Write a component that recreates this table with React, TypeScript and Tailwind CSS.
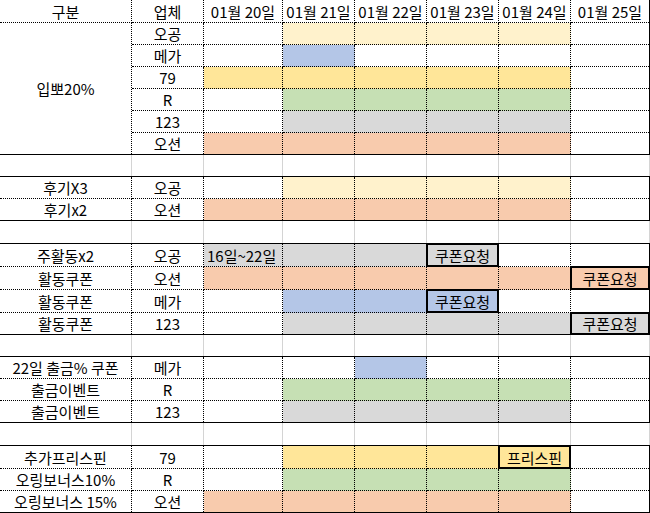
const COLS = "grid grid-cols-[132px_72px_79px_72px_72px_72px_72px_78px]";

const bg = {
  o: "bg-[#fff2cc]",
  m: "bg-[#b4c6e7]",
  y: "bg-[#ffe699]",
  r: "bg-[#c6e0b4]",
  g: "bg-[#d9d9d9]",
  s: "bg-[#f8cbad]",
  w: "bg-white",
} as const;

type Key = keyof typeof bg;
type Day = Key | { c: Key; text: string; box?: boolean; left?: boolean };

interface Row {
  label?: string;
  vendor: string;
  days: Day[];
}

interface Section {
  rowsClass: string;
  top: boolean;
  header?: boolean;
  merged?: string;
  rows: Row[];
}

const sections: Section[] = [
  {
    rowsClass: "grid-rows-[23px_22px_22px_22px_22px_22px_21px]",
    top: false,
    header: true,
    merged: "입뽀20%",
    rows: [
      { vendor: "오공", days: ["w", "o", "o", "o", "o", "w"] },
      { vendor: "메가", days: ["w", "m", "w", "w", "w", "w"] },
      { vendor: "79", days: ["y", "y", "y", "y", "y", "w"] },
      { vendor: "R", days: ["w", "r", "r", "r", "r", "w"] },
      { vendor: "123", days: ["w", "g", "g", "g", "g", "w"] },
      { vendor: "오션", days: ["s", "s", "s", "s", "s", "w"] },
    ],
  },
  {
    rowsClass: "grid-rows-[22px_21px]",
    top: true,
    rows: [
      { label: "후기X3", vendor: "오공", days: ["w", "o", "o", "o", "o", "w"] },
      { label: "후기x2", vendor: "오션", days: ["s", "s", "s", "s", "s", "w"] },
    ],
  },
  {
    rowsClass: "grid-rows-[23px_23px_23px_21px]",
    top: true,
    rows: [
      {
        label: "주활동x2",
        vendor: "오공",
        days: [{ c: "g", text: "16일~22일", left: true }, "g", "g", { c: "g", text: "쿠폰요청", box: true }, "w", "w"],
      },
      {
        label: "활동쿠폰",
        vendor: "오션",
        days: ["s", "s", "s", "s", "s", { c: "s", text: "쿠폰요청", box: true }],
      },
      {
        label: "활동쿠폰",
        vendor: "메가",
        days: ["w", "m", "m", { c: "m", text: "쿠폰요청", box: true }, "w", "w"],
      },
      {
        label: "활동쿠폰",
        vendor: "123",
        days: ["w", "g", "g", "g", "g", { c: "g", text: "쿠폰요청", box: true }],
      },
    ],
  },
  {
    rowsClass: "grid-rows-[22px_22px_21px]",
    top: true,
    rows: [
      { label: "22일 출금% 쿠폰", vendor: "메가", days: ["w", "w", "m", "w", "w", "w"] },
      { label: "출금이벤트", vendor: "R", days: ["w", "r", "r", "r", "r", "w"] },
      { label: "출금이벤트", vendor: "123", days: ["w", "g", "g", "g", "g", "w"] },
    ],
  },
  {
    rowsClass: "grid-rows-[23px_22px_21px]",
    top: true,
    rows: [
      {
        label: "추가프리스핀",
        vendor: "79",
        days: ["w", "y", "y", "y", { c: "y", text: "프리스핀", box: true }, "w"],
      },
      { label: "오링보너스10%", vendor: "R", days: ["w", "r", "r", "r", "r", "w"] },
      { label: "오링보너스 15%", vendor: "오션", days: ["s", "s", "s", "s", "s", "w"] },
    ],
  },
];

const blanks = ["h-[21px]", "h-[22px]", "h-[21px]", "h-[22px]"];

const dates = ["01월 20일", "01월 21일", "01월 22일", "01월 23일", "01월 24일", "01월 25일"];

function Cell({
  children,
  last,
  lastCol,
  className = "",
}: {
  children?: React.ReactNode;
  last?: boolean;
  lastCol?: boolean;
  className?: string;
}) {
  return (
    <div
      className={`relative flex items-center justify-center whitespace-nowrap border-dotted border-black ${
        lastCol ? "" : "border-r"
      } ${last ? "" : "border-b"} ${className}`}
    >
      {children}
    </div>
  );
}

function DayCell({ day, last, lastCol }: { day: Day; last: boolean; lastCol: boolean }) {
  if (typeof day === "string") return <Cell last={last} lastCol={lastCol} className={bg[day]} />;
  return (
    <Cell last={last} lastCol={lastCol} className={`${bg[day.c]} ${day.left ? "justify-start pl-[3px]" : ""}`}>
      {day.text}
      {day.box && <span className="absolute -top-px -bottom-px -left-px -right-px border-2 border-black" />}
    </Cell>
  );
}

function Blank({ h }: { h: string }) {
  return (
    <div className={`${COLS} ${h} border-r border-[#d4d4d4]`}>
      {Array.from({ length: 8 }).map((_, i) => (
        <div key={i} className={i < 7 ? "border-r border-[#d4d4d4]" : ""} />
      ))}
    </div>
  );
}

function Block({ s }: { s: Section }) {
  return (
    <div className={`${COLS} ${s.rowsClass} border-b border-r border-black ${s.top ? "border-t" : ""}`}>
      {s.header && (
        <>
          <Cell>구분</Cell>
          <Cell>업체</Cell>
          {dates.map((d, i) => (
            <Cell key={d} lastCol={i === 5}>
              {d}
            </Cell>
          ))}
        </>
      )}
      {s.rows.map((r, ri) => {
        const last = ri === s.rows.length - 1;
        return (
          <div key={ri} className="contents">
            {s.merged && ri === 0 && (
              <Cell last className="row-span-6">
                {s.merged}
              </Cell>
            )}
            {r.label && <Cell last={last}>{r.label}</Cell>}
            <Cell last={last}>{r.vendor}</Cell>
            {r.days.map((d, di) => (
              <DayCell key={di} day={d} last={last} lastCol={di === 5} />
            ))}
          </div>
        );
      })}
    </div>
  );
}

export default function App() {
  return (
    <div className="w-[650px] h-[513px] overflow-hidden bg-white text-[15px] leading-none text-black font-['Noto_Sans_CJK_KR',sans-serif]">
      {sections.map((s, i) => (
        <div key={i}>
          <Block s={s} />
          {i < blanks.length && <Blank h={blanks[i]} />}
        </div>
      ))}
    </div>
  );
}
